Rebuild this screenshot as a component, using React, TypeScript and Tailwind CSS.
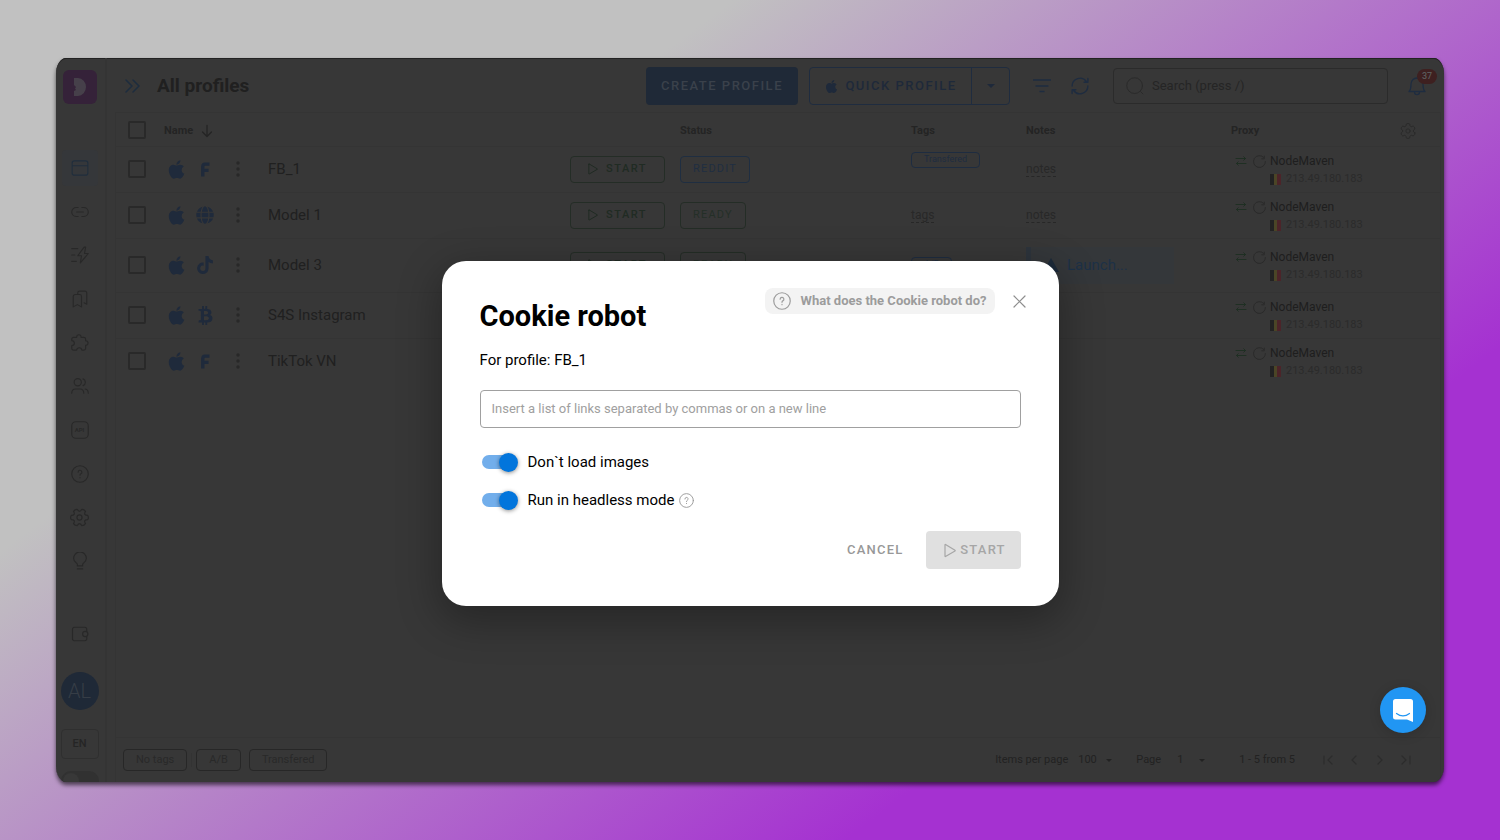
import type { ReactNode } from "react";
import { FaApple, FaBtc, FaGlobe, FaTiktok } from "react-icons/fa";

type IconProps = { className?: string; children?: ReactNode; sw?: number; box?: string };

function Svg({ className, children, sw = 1.5, box = "0 0 24 24" }: IconProps) {
  return (
    <svg
      viewBox={box}
      className={className}
      fill="none"
      stroke="currentColor"
      strokeWidth={sw}
      strokeLinecap="round"
      strokeLinejoin="round"
      aria-hidden="true"
    >
      {children}
    </svg>
  );
}

function HelpIcon({ className, sw = 1.5 }: IconProps) {
  return (
    <Svg className={className} sw={sw}>
      <circle cx="12" cy="12" r="11" />
      <path d="M9.5 9.6a2.5 2.5 0 1 1 3.6 2.2c-.8.4-1.1.9-1.1 1.9" />
      <path d="M12 16.6v.3" />
    </Svg>
  );
}

function polar(deg: number, r: number) {
  const a = (deg * Math.PI) / 180;
  return `${(12 + r * Math.cos(a)).toFixed(2)} ${(12 + r * Math.sin(a)).toFixed(2)}`;
}

function gearPath(start: number) {
  const teeth = [0, 60, 120, 180, 240, 300].map((t) => {
    const c = t + start;
    return `${polar(c - 14, 10.8)} Q${polar(c, 12)} ${polar(c + 14, 10.8)} Q${polar(c + 30, 5.2)} ${polar(c + 46, 10.8)}`;
  });
  return "M" + teeth.join(" L") + "z";
}

function GearIcon({ className, start = 0 }: { className?: string; start?: number }) {
  return (
    <Svg className={className} sw={1.5}>
      <circle cx="12" cy="12" r="3.2" />
      <path d={gearPath(start)} />
    </Svg>
  );
}

function PlayIcon({ className }: IconProps) {
  return (
    <Svg className={className} sw={1.2} box="0 0 12 14">
      <path d="M1 1.3v11.4c0 .3.3.4.5.3l9.5-5.5c.3-.2.3-.6 0-.8L1.5 1c-.2-.1-.5 0-.5.3z" />
    </Svg>
  );
}

function FacebookIcon() {
  return (
    <svg viewBox="0 0 18 20" className="h-[18px] w-4" fill="none" stroke="currentColor" strokeWidth="3.8" aria-hidden="true">
      <path d="M6.5 18.5V7.5Q6.5 4.5 9 4.5h5M6.5 11.5h6.5" />
    </svg>
  );
}

function Caret({ className = "h-1 w-2" }: { className?: string }) {
  return (
    <svg viewBox="0 0 8 4" className={"pointer-events-none " + className} fill="currentColor" aria-hidden="true">
      <path d="M0 0h8L4 4z" />
    </svg>
  );
}

const NAV: { label: string; icon: ReactNode }[] = [
  {
    label: "Profiles",
    icon: (
      <>
        <rect x="1.5" y="2.5" width="21" height="19" rx="3" />
        <path d="M2 9h20" />
      </>
    ),
  },
  {
    label: "Proxies",
    icon: <path d="M9.5 6H7a6 6 0 0 0 0 12h2.5M14.5 6H17a6 6 0 0 1 0 12h-2.5M7.5 12h9" />,
  },
  {
    label: "Automation",
    icon: <path d="M17.5 1.5 9 13h5l-1.5 9.5L23 10h-5l1.5-8.5zM1 3.5h8M1 12h4M1 20.5h6" />,
  },
  {
    label: "Bookmarks",
    icon: (
      <>
        <path d="M3 8.5A2.5 2.5 0 0 1 5.5 6h6A2.5 2.5 0 0 1 14 8.5V22.5l-5.5-3-5.5 3z" />
        <path d="M9 6V4a2.5 2.5 0 0 1 2.5-2.5h7A2.5 2.5 0 0 1 21 4v15l-3.5-2" />
      </>
    ),
  },
  {
    label: "Extensions",
    icon: (
      <path d="M3.5 4.5h4c0-2 1-3.5 3-3.5s3 1.5 3 3.5H17A2.5 2.5 0 0 1 19.5 7v2c2 .2 3.200 1.300 3.200 3s-1.200 3-3.200 3v4a2.500 2.500 0 0 1-2.500 2.500h-2.500c-.3-2-1.500-3.200-3.500-3.200s-3.200 1.200-3.500 3.200h-4A2.500 2.500 0 0 1 1 19v-3.500c2-.2 3.500-1.200 3.500-3.200S3 9 1 8.800V7a2.500 2.500 0 0 1 2.500-2.500z" />
    ),
  },
  {
    label: "Team",
    icon: (
      <>
        <circle cx="9" cy="7" r="4.8" />
        <path d="M1 21.500c0-4 2-5.500 5-5.500h6c3 0 5 1.500 5 5.500M16 2.500a4.800 4.800 0 0 1 0 9M19 16c3 .5 4 2.500 4 5.500" />
      </>
    ),
  },
  { label: "API", icon: <rect x="1" y="1" width="22" height="22" rx="5.5" /> },
  {
    label: "Help",
    icon: (
      <>
        <circle cx="12" cy="12" r="11" />
        <path d="M9.500 9.600a2.500 2.500 0 1 1 3.600 2.200c-.8.4-1.100.9-1.100 1.900M12 16.800v.2" />
      </>
    ),
  },
  { label: "Settings", icon: null },
  {
    label: "Ideas",
    icon: <path d="M8.500 18.500v-2c0-1.500-5-3.500-5-8a8.500 8.500 0 0 1 17 0c0 4.500-5 6.500-5 8v2zM8.500 22.500h7" />,
  },
];

function Sidebar() {
  return (
    <aside className="flex w-[51px] shrink-0 flex-col items-center border-r-2 border-[#343434] pt-3 pr-0.5 text-[#282828]">
      <a href="#home" aria-label="Home" className="flex size-[34px] items-center justify-center rounded-md bg-[#352239] text-[#46404a]">
        <svg viewBox="0 0 16 20" className="h-5 w-4" fill="currentColor" aria-hidden="true">
          <path d="M2 1h4a8 9 0 0 1 0 18H2v-5l2-1-1-1.500 1-1.500-2-2z" />
        </svg>
      </a>
      <nav className="mt-[46px] flex h-[429px] flex-col justify-between">
        {NAV.map((n, i) => (
          <a
            key={n.label}
            href={"#" + n.label.toLowerCase()}
            aria-label={n.label}
            className={
              i === 0
                ? "relative flex size-9 items-center justify-center rounded bg-[#35373a] text-[#202e3d]"
                : "relative flex size-9 items-center justify-center"
            }
          >
            {n.icon ? <Svg className="size-[18px]">{n.icon}</Svg> : <GearIcon className="size-[19px]" />}
            {n.label === "API" && <span className="absolute text-[6px] font-bold">API</span>}
          </a>
        ))}
      </nav>
      <div className="mt-auto flex flex-col items-center">
        <a href="#billing" aria-label="Billing" className="flex h-5 items-center">
          <Svg className="size-[18px]">
            <path d="M21 8V5.500A2.500 2.500 0 0 0 18.500 3h-14A2.500 2.500 0 0 0 2 5.500v13A2.500 2.500 0 0 0 4.500 21h14a2.500 2.500 0 0 0 2.500-2.500V16" />
            <circle cx="19" cy="12" r="3.5" />
          </Svg>
        </a>
        <button className="mt-7 size-[38px] rounded-full bg-[#1f2937] text-xl font-light text-[#363d46]">AL</button>
        <button className="mt-[19px] h-[30px] w-[38px] rounded border border-[#2f2f2f] text-[11px] font-medium text-[#252525]">EN</button>
        <div className="mt-3 h-[11px] overflow-hidden">
          <label className="flex h-5 w-[38px] items-center rounded-full bg-[#313131] pl-0.5">
            <input type="checkbox" aria-label="Dark theme" className="sr-only" />
            <span className="size-4 rounded-full bg-[#383838]" />
          </label>
        </div>
      </div>
    </aside>
  );
}

function TopBar() {
  return (
    <header className="flex h-[54px] items-center px-[18px] pt-0.5">
      <button aria-label="Expand menu" className="text-[#1d2c3e]">
        <Svg className="h-3.5 w-4" box="0 0 16 14" sw={1.5}>
          <path d="m1 1 6 6-6 6M8 1l6 6-6 6" />
        </Svg>
      </button>
      <h1 className="ml-4 text-[19px] font-bold text-[#202020]">All profiles</h1>
      <button className="ml-auto h-[38px] w-[152px] rounded bg-[#1f2937] text-[13px] font-medium tracking-[1.5px] text-[#3a414b]">
        CREATE PROFILE
      </button>
      <div className="ml-[11px] flex h-[38px] rounded border border-[#1f2c3f] text-[#1e293a]">
        <button className="flex w-[161px] items-center justify-center gap-1.5 text-[13px] font-medium tracking-[1.5px]">
          <FaApple className="size-[15px]" />
          QUICK PROFILE
        </button>
        <button aria-label="More profile types" className="flex w-[38px] items-center justify-center border-l border-[#1f2c3f]">
          <Caret />
        </button>
      </div>
      <button aria-label="Filter" className="ml-[23px] text-[#1e2c40]">
        <Svg className="h-4 w-[18px]" box="0 0 18 16" sw={1.3}>
          <path d="M0 2h18M3 8h12M7 13.500h4" />
        </Svg>
      </button>
      <button aria-label="Refresh" className="ml-5 text-[#1e2c40]">
        <Svg className="size-[18px]" sw={1.9}>
          <path d="M1.500 12A10.500 10.500 0 0 1 20.500 6M22.500 2v5h-5M22.500 12A10.500 10.500 0 0 1 3.500 18M1.500 22v-5h5" />
        </Svg>
      </button>
      <label className="ml-6 flex h-9 w-[275px] items-center gap-2 rounded-sm border border-[#2b2b2b] px-3 text-[#2a2a2a]">
        <Svg className="size-[18px] shrink-0" sw={1.3}>
          <circle cx="11.5" cy="11.5" r="10.5" />
          <path d="m19.500 19.500 3 3" />
        </Svg>
        <input
          type="search"
          aria-label="Search"
          placeholder="Search (press /)"
          className="w-full bg-transparent text-[13px] outline-none placeholder:text-[#252525]"
        />
      </label>
      <button aria-label="Notifications" className="relative ml-5 text-[#1e2c40]">
        <Svg className="h-[22px] w-[18px]" box="0 0 18 22" sw={1.3}>
          <path d="M1 16.500c2-2 2-4 2-7.500a6 6 0 0 1 12 0c0 3.500 0 5.500 2 7.500zM6.500 17c0 3.500 5 3.500 5 0" />
        </Svg>
        <span className="absolute -top-1.5 left-[9px] flex h-[15px] w-5 items-center justify-center rounded-full bg-[#3e2020] text-[9px] font-medium text-[#5a5a5a]">
          37
        </span>
      </button>
    </header>
  );
}

type Row = { name: string; kind: "fb" | "globe" | "tiktok" | "btc"; status: string; tag: string; note: string; tall?: boolean };

const ROWS: Row[] = [
  { name: "FB_1", kind: "fb", status: "REDDIT", tag: "Transfered", note: "" },
  { name: "Model 1", kind: "globe", status: "READY", tag: "", note: "" },
  { name: "Model 3", kind: "tiktok", status: "READY", tag: "A/B", note: "Launch...", tall: true },
  { name: "S4S Instagram", kind: "btc", status: "READY", tag: "", note: "" },
  { name: "TikTok VN", kind: "fb", status: "READY", tag: "", note: "" },
];

function Check({ label }: { label: string }) {
  return (
    <input
      type="checkbox"
      aria-label={label}
      className="block size-[18px] appearance-none rounded-xs border-2 border-[#292929]"
    />
  );
}

function KindIcon({ kind }: { kind: Row["kind"] }) {
  if (kind === "fb") return <FacebookIcon />;
  if (kind === "globe") return <FaGlobe className="size-[18px]" />;
  if (kind === "tiktok") return <FaTiktok className="size-[18px]" />;
  return <FaBtc className="size-[19px]" />;
}

function ProxyCell() {
  return (
    <div className="flex pt-0.5 pl-1 text-xs leading-[18px]">
      <Svg className="mt-[3px] size-3 text-[#1f2f23]" sw={2}>
        <path d="M2 7h19M17.500 3.500 21 7l-3.500 3.500M22 17H3M6.500 13.500 3 17l3.500 3.500" />
      </Svg>
      <Svg className="mt-[3px] ml-1.5 size-[13px] text-[#2a2a2a]" sw={1.8}>
        <path d="M20 4.500A11 11 0 1 0 23 12M21 2v5h-5" />
      </Svg>
      <div className="ml-1">
        <div className="text-[#1e1e1e]">NodeMaven</div>
        <div className="flex items-center gap-[5px] text-[11px] leading-[18px] text-[#2b2b2b]">
          <span className="flex h-[11px] w-[11px]">
            <i className="flex-1 bg-[#222222]" />
            <i className="flex-1 bg-[#4b4526]" />
            <i className="flex-1 bg-[#4c2429]" />
          </span>
          213.49.180.183
        </div>
      </div>
    </div>
  );
}

function ProfileTable() {
  return (
    <table className="w-full table-fixed border-collapse text-left">
      <colgroup>
        <col className="w-[48px]" />
        <col />
        <col className="w-[231px]" />
        <col className="w-[115px]" />
        <col className="w-[205px]" />
        <col className="w-[209px]" />
      </colgroup>
      <thead>
        <tr className="h-[33px] border-b border-[#343434] text-[11px] text-[#242424]">
          <th className="pt-0.5 pl-3">
            <Check label="Select all" />
          </th>
          <th className="pt-1">
            <span className="flex items-center gap-2">
              Name
              <Svg className="h-3.5 w-3" box="0 0 12 14" sw={1.3}>
                <path d="M6 1.500v11M1.500 8 6 12.500 10.500 8" />
              </Svg>
            </span>
          </th>
          <th className="pt-1">Status</th>
          <th className="pt-1">Tags</th>
          <th className="pt-1">Notes</th>
          <th className="pt-1">
            <span className="flex items-center justify-between pr-6">
              Proxy
              <button aria-label="Table settings" className="text-[#2b2b2b]">
                <GearIcon className="size-4" start={30} />
              </button>
            </span>
          </th>
        </tr>
      </thead>
      <tbody>
        {ROWS.map((r, i) => (
          <tr
            key={r.name}
            className={
              (r.tall ? "h-[54px]" : "h-[46px]") + (i < ROWS.length - 1 ? " border-b border-[#343434]" : "")
            }
          >
            <td className="pl-3">
              <Check label={"Select " + r.name} />
            </td>
            <td>
              <div className="flex items-center pr-[15px] text-[#1f2a3b]">
                <FaApple className="ml-0.5 size-[21px] shrink-0" />
                <span className="ml-2 flex w-5 shrink-0 justify-center">
                  <KindIcon kind={r.kind} />
                </span>
                <button aria-label="Profile menu" className="ml-[21px] text-[#282828]">
                  <svg viewBox="0 0 4 16" className="h-4 w-1" fill="currentColor" aria-hidden="true">
                    <circle cx="2" cy="2" r="1.7" />
                    <circle cx="2" cy="8" r="1.7" />
                    <circle cx="2" cy="14" r="1.7" />
                  </svg>
                </button>
                <span className="ml-7 text-[15px] text-[#202020]">{r.name}</span>
                <button className="ml-auto flex h-[27px] w-[95px] items-center justify-center gap-2 rounded-sm border border-[#242d26] text-[11px] font-medium tracking-[1.5px] text-[#202b23]">
                  <PlayIcon className="h-3 w-2.5" />
                  START
                </button>
              </div>
            </td>
            <td>
              <button
                className={
                  r.status === "REDDIT"
                    ? "block h-[27px] rounded-sm border border-[#1f2e41] px-3 text-[11px] tracking-[1.2px] text-[#1f2e41]"
                    : "block h-[27px] rounded-sm border border-[#242d26] px-3 text-[11px] tracking-[1.2px] text-[#242f27]"
                }
              >
                {r.status}
              </button>
            </td>
            <td className={r.tag && !r.tall ? "pt-[5px] align-top" : ""}>
              {r.tag ? (
                <button className="flex h-4 items-center rounded-sm border border-[#1e2c40] px-3 text-[9px] text-[#1e2c40]">{r.tag}</button>
              ) : (
                <button className="block h-[15px] border-b border-dashed border-[#272727] text-xs leading-[14px] text-[#282828]">
                  tags
                </button>
              )}
            </td>
            <td>
              {r.note ? (
                <div className="flex h-[37px] w-[148px] items-center gap-2 border-l-[5px] border-[#2d343c] bg-[#34373a] pl-3 text-[15px] text-[#1d3147]">
                  <svg viewBox="0 0 16 14" className="h-3.5 w-4 text-[#1c2a3a]" fill="currentColor" aria-hidden="true">
                    <path d="M8 0l8 14H0z" />
                  </svg>
                  {r.note}
                </div>
              ) : (
                <button className="block h-[15px] border-b border-dashed border-[#272727] text-xs leading-[14px] text-[#282828]">
                  notes
                </button>
              )}
            </td>
            <td>
              <ProxyCell />
            </td>
          </tr>
        ))}
      </tbody>
    </table>
  );
}

const CHIP = "h-[22px] rounded-sm border border-[#272727] px-3 text-[11px] text-[#292929]";

function Footer() {
  return (
    <footer className="mt-auto flex h-[45px] items-center border-t border-[#343434] pr-[29px] pl-[7px] text-[#222222]">
      <button className={CHIP}>No tags</button>
      <span className="mx-1 h-3.5 w-px bg-[#333333]" />
      <button className={CHIP}>A/B</button>
      <button className={"ml-2 " + CHIP}>Transfered</button>
      <label htmlFor="per-page" className="ml-auto text-[11px]">
        Items per page
      </label>
      <div className="ml-2.5 flex items-center">
        <select id="per-page" className="w-7 appearance-none bg-transparent text-[11px] outline-none">
          <option>100</option>
        </select>
        <Caret className="h-[3px] w-1.5" />
      </div>
      <label htmlFor="page" className="ml-6 text-[11px]">
        Page
      </label>
      <div className="ml-4 flex items-center">
        <select id="page" className="w-[22px] appearance-none bg-transparent text-[11px] outline-none">
          <option>1</option>
        </select>
        <Caret className="h-[3px] w-1.5" />
      </div>
      <span className="ml-[34px] text-[11px]">1 - 5 from 5</span>
      <div className="ml-7 flex gap-4 text-[#2c2c2c]">
        {[
          ["First page", "M1 1v8M9 1 5 5l4 4"],
          ["Previous page", "M7 1 3 5l4 4"],
          ["Next page", "m3 1 4 4-4 4"],
          ["Last page", "m1 1 4 4-4 4M9 1v8"],
        ].map(([label, d]) => (
          <button key={label} aria-label={label}>
            <Svg className="size-2.5" box="0 0 10 10" sw={1.2}>
              <path d={d} />
            </Svg>
          </button>
        ))}
      </div>
    </footer>
  );
}

function Toggle({ id, label, children }: { id: string; label: string; children?: ReactNode }) {
  return (
    <div className="flex h-6 items-center">
      <label htmlFor={id} className="flex items-center text-[15px]">
        <span className="relative ml-0.5 flex h-5 w-9 items-center">
          <input id={id} type="checkbox" defaultChecked className="peer sr-only" />
          <span className="h-3.5 w-[34px] rounded-full bg-[#bdbdbd] peer-checked:bg-[#72aeeb]" />
          <span className="absolute left-0 size-[19px] rounded-full bg-white shadow-[0_1px_4px_rgba(0,0,0,0.45)] peer-checked:left-[17px] peer-checked:bg-[#0275dc]" />
        </span>
        <span className="ml-2.5">{label}</span>
      </label>
      {children}
    </div>
  );
}

function CookieDialog() {
  return (
    <div className="absolute inset-0 flex items-center justify-center pt-[27px]">
      <section
        role="dialog"
        aria-labelledby="dialog-title"
        className="w-[617px] max-w-full rounded-3xl bg-white px-[38px] pt-[27px] pb-[37px] text-black shadow-[0_12px_40px_4px_rgba(0,0,0,0.3)]"
      >
        <div className="flex items-start">
          <h2 id="dialog-title" className="mt-2 text-[29px] leading-10 font-bold">
            Cookie robot
          </h2>
          <button className="ml-auto flex h-[26px] items-center gap-2.5 rounded-lg bg-[#f3f3f3] px-2 text-[13px] font-bold text-[#9c9c9c]">
            <HelpIcon className="size-[18px]" sw={1.6} />
            What does the Cookie robot do?
          </button>
          <button aria-label="Close" className="-mr-[5px] ml-[18px] flex h-[26px] items-center text-[#8e8e8e]">
            <Svg className="size-[13px]" box="0 0 13 13" sw={1.2}>
              <path d="m1 1 11 11M12 1 1 12" />
            </Svg>
          </button>
        </div>
        <p className="mt-3 text-[15px] leading-6">For profile: FB_1</p>
        <textarea
          aria-label="Links"
          rows={1}
          placeholder="Insert a list of links separated by commas or on a new line"
          className="mt-[18px] block h-[38px] w-full resize-none rounded border border-[#a0a0a0] px-[11px] py-2 text-[13px] leading-5 outline-none placeholder:text-[#a0a0a0]"
        />
        <div className="mt-[22px] flex flex-col gap-3.5">
          <Toggle id="no-images" label="Don`t load images" />
          <Toggle id="headless" label="Run in headless mode">
            <button aria-label="About headless mode" className="ml-[5px] text-[#9a9a9a]">
              <HelpIcon className="block size-[15px]" sw={1.5} />
            </button>
          </Toggle>
        </div>
        <div className="mt-[19px] flex items-center justify-end">
          <button className="h-[38px] px-4 text-[13px] font-medium tracking-[1.2px] text-[#989898]">CANCEL</button>
          <button
            disabled
            className="ml-1.5 flex h-[38px] w-[95px] items-center justify-center gap-1 rounded bg-[#e0e0e0] pl-1 text-[13px] font-medium tracking-[1.2px] text-[#a6a6a6]"
          >
            <PlayIcon className="h-[15px] w-3" />
            START
          </button>
        </div>
      </section>
    </div>
  );
}

export default function App() {
  return (
    <main className="flex min-h-screen bg-[linear-gradient(143deg,#c1c1c1_28%,#a531d1_75%)] px-14 py-[58px] font-[Roboto,sans-serif]">
      <div className="relative flex flex-1 overflow-hidden rounded-[10px/16px] bg-[#373737] shadow-[0_3px_4px_rgba(0,0,0,0.6),inset_0_1px_0_#222222]">
        <Sidebar />
        <div className="flex min-w-0 flex-1 flex-col">
          <TopBar />
          <div className="mr-[3px] ml-2 flex flex-1 flex-col border-x border-t border-[#343434]">
            <ProfileTable />
            <Footer />
          </div>
        </div>
        <CookieDialog />
        <button
          aria-label="Open chat"
          className="absolute right-[18px] bottom-[49px] flex size-[46px] items-center justify-center rounded-full bg-[#2196f3] shadow-[0_2px_12px_rgba(0,0,0,0.15)]"
        >
          <svg viewBox="0 0 20 23" className="h-[23px] w-5" fill="none" aria-hidden="true">
            <path d="M2.500 0h15A2.500 2.500 0 0 1 20 2.500V23l-6-2.500H2.500A2.500 2.500 0 0 1 0 18V2.500A2.500 2.500 0 0 1 2.500 0z" fill="white" />
            <path d="M3.500 14.500c4 3 9 3 13 0" stroke="#2196f3" strokeWidth="1.2" strokeLinecap="round" />
          </svg>
        </button>
      </div>
    </main>
  );
}
